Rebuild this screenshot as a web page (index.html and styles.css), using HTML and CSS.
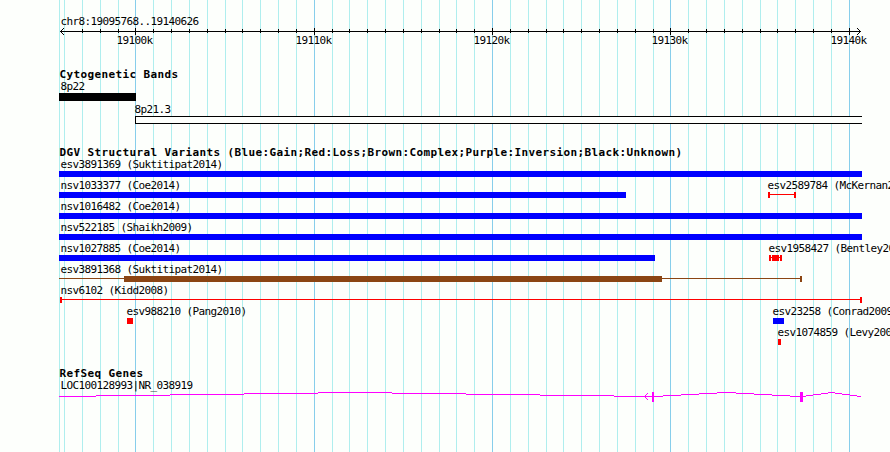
FILE: index.html
```html
<!DOCTYPE html>
<html lang="en">
<head>
<meta charset="utf-8">
<title>chr8:19095768..19140626</title>
<link rel="stylesheet" href="styles.css">
</head>
<body>
<main class="browser">
  <svg class="grid" width="890" height="452" aria-hidden="true">
    <path class="minor" d="M59.5 0V452M64.5 0V452M82.5 0V452M100.5 0V452M118.5 0V452M153.5 0V452M171.5 0V452M189.5 0V452M207.5 0V452M225.5 0V452M242.5 0V452M260.5 0V452M278.5 0V452M296.5 0V452M332.5 0V452M349.5 0V452M367.5 0V452M385.5 0V452M403.5 0V452M421.5 0V452M439.5 0V452M456.5 0V452M474.5 0V452M510.5 0V452M528.5 0V452M546.5 0V452M563.5 0V452M581.5 0V452M599.5 0V452M617.5 0V452M635.5 0V452M653.5 0V452M688.5 0V452M706.5 0V452M724.5 0V452M742.5 0V452M760.5 0V452M777.5 0V452M795.5 0V452M813.5 0V452M831.5 0V452"/>
    <path class="major" d="M135.5 0V452M314.5 0V452M492.5 0V452M670.5 0V452M849.5 0V452"/>
  </svg>

  <svg class="ruler" width="890" height="68">
    <text x="60.5" y="25">chr8:19095768..19140626</text>
    <path class="axis" d="M60 31.5H861M61 30.5h1M62 29.5h1M63 28.5h1M61 32.5h1M62 33.5h1M63 34.5h1M859 30.5h1M858 29.5h1M857 28.5h1M859 32.5h1M858 33.5h1M857 34.5h1"/>
    <path class="axis" d="M82.5 29V33M100.5 29V33M118.5 29V33M153.5 29V33M171.5 29V33M189.5 29V33M207.5 29V33M225.5 29V33M242.5 29V33M260.5 29V33M278.5 29V33M296.5 29V33M332.5 29V33M349.5 29V33M367.5 29V33M385.5 29V33M403.5 29V33M421.5 29V33M439.5 29V33M456.5 29V33M474.5 29V33M510.5 29V33M528.5 29V33M546.5 29V33M563.5 29V33M581.5 29V33M599.5 29V33M617.5 29V33M635.5 29V33M653.5 29V33M688.5 29V33M706.5 29V33M724.5 29V33M742.5 29V33M760.5 29V33M777.5 29V33M795.5 29V33M813.5 29V33M831.5 29V33"/>
    <path class="axis" d="M135.5 28V35M314.5 28V35M492.5 28V35M670.5 28V35M849.5 28V35"/>
    <text x="116.5" y="44">19100k</text>
    <text x="295.5" y="44">19110k</text>
    <text x="473.5" y="44">19120k</text>
    <text x="651.5" y="44">19130k</text>
    <text x="830.5" y="44">19140k</text>
  </svg>

  <section class="track">
    <h2>Cytogenetic Bands</h2>
    <svg width="890" height="23">
      <text x="60.5" y="10">8p22</text>
      <rect x="59" y="13" width="77" height="8"/>
    </svg>
    <svg width="890" height="23">
      <text x="134.5" y="10">8p21.3</text>
      <rect class="paper" x="135" y="13" width="727" height="8"/>
      <path class="axis" d="M862 13.5H135.5V20.5H862"/>
    </svg>
  </section>

  <section class="track">
    <h2>DGV Structural Variants (Blue:Gain;Red:Loss;Brown:Complex;Purple:Inversion;Black:Unknown)</h2>
    <svg width="890" height="21">
      <text x="60.5" y="10">esv3891369 (Suktitipat2014)</text>
      <rect class="gain" x="59" y="13" width="803" height="6"/>
    </svg>
    <svg width="890" height="21">
      <text x="60.5" y="10">nsv1033377 (Coe2014)</text>
      <rect class="gain" x="59" y="13" width="567" height="6"/>
      <text x="767.5" y="10">esv2589784 (McKernan2009)</text>
      <path class="loss" d="M768 13h2v2h24v-2h2v6h-2v-3h-24v3h-2z"/>
    </svg>
    <svg width="890" height="21">
      <text x="60.5" y="10">nsv1016482 (Coe2014)</text>
      <rect class="gain" x="59" y="13" width="803" height="6"/>
    </svg>
    <svg width="890" height="21">
      <text x="60.5" y="10">nsv522185 (Shaikh2009)</text>
      <rect class="gain" x="59" y="13" width="803" height="6"/>
    </svg>
    <svg width="890" height="21">
      <text x="60.5" y="10">nsv1027885 (Coe2014)</text>
      <rect class="gain" x="59" y="13" width="596" height="6"/>
      <text x="768.5" y="10">esv1958427 (Bentley2008)</text>
      <path class="loss" d="M769 13h2v6h-2zM772 13h7v6h-7zM780 13h2v6h-2zM771 15h9v1h-9z"/>
    </svg>
    <svg width="890" height="21">
      <text x="60.5" y="10">esv3891368 (Suktitipat2014)</text>
      <path class="complex" d="M59 15h65v-2h538v2h138v-2h2v6h-2v-3h-138v3h-538v-3h-65z"/>
    </svg>
    <svg width="890" height="21">
      <text x="60.5" y="10">nsv6102 (Kidd2008)</text>
      <path class="loss" d="M60 13h2v2h798v-2h2v6h-2v-3h-798v3h-2z"/>
    </svg>
    <svg width="890" height="21">
      <text x="126.5" y="10">esv988210 (Pang2010)</text>
      <rect class="loss" x="127" y="13" width="6" height="6"/>
      <text x="772.5" y="10">esv23258 (Conrad2009)</text>
      <rect class="gain" x="773" y="13" width="11" height="6"/>
    </svg>
    <svg width="890" height="21">
      <text x="777.5" y="10">esv1074859 (Levy2007)</text>
      <rect class="loss" x="778" y="13" width="3" height="6"/>
    </svg>
  </section>

  <section class="track">
    <h2>RefSeq Genes</h2>
    <svg width="890" height="30">
      <text x="60.5" y="10">LOC100128993|NR_038919</text>
      <path class="intron" d="M59 17.5H96M96 16.5H170M170 15.5H244M244 14.5H318M318 13.5H392M392 14.5H466M466 15.5H540M540 16.5H614M614 17.5H663M663 16.5H681M681 15.5H699M699 14.5H717M717 13.5H736M736 14.5H754M754 15.5H772M772 16.5H790M790 17.5H806M806 16.5H813M813 15.5H821M821 14.5H828M828 13.5H835M835 14.5H842M842 15.5H850M850 16.5H857M857 17.5H861"/>
      <path class="intron" d="M647 14.5h1M646 15.5h1M645 16.5h1M645 18.5h1M646 19.5h1M647 20.5h1"/>
      <path class="exon" d="M652 13h2v10h-2zM800 13h3v10h-3z"/>
    </svg>
  </section>
</main>
</body>
</html>
```

FILE: styles.css
```css
body {
  margin: 0;
  background: #fdfffc;
}

.browser {
  position: relative;
  display: flex;
  flex-direction: column;
  width: 890px;
  height: 452px;
  overflow: hidden;
  font: 11px/13px "DejaVu Sans Mono", monospace;
  color: #000;
}

svg {
  display: block;
  flex: none;
  shape-rendering: crispEdges;
}

.grid {
  position: absolute;
  inset: 0;
}

.ruler,
.track {
  position: relative;
}

.track {
  display: flex;
  flex-direction: column;
  margin-bottom: 20px;
}

h2 {
  height: 12px;
  margin: 0 0 0 59.5px;
  font-size: 11px;
  line-height: 13px;
  letter-spacing: 0.378px;
  white-space: nowrap;
}

text {
  font-size: 11px;
  letter-spacing: -0.622px;
  white-space: pre;
}

path {
  fill: none;
}

.minor {
  stroke: #afeeee;
}

.major {
  stroke: #87ceeb;
}

.axis {
  stroke: #000;
}

.paper {
  fill: #fdfffc;
}

.gain {
  fill: #00f;
}

.loss {
  fill: #f00;
}

.complex {
  fill: #8b4513;
}

.intron {
  stroke: #f0f;
}

.exon {
  fill: #f0f;
}
```
